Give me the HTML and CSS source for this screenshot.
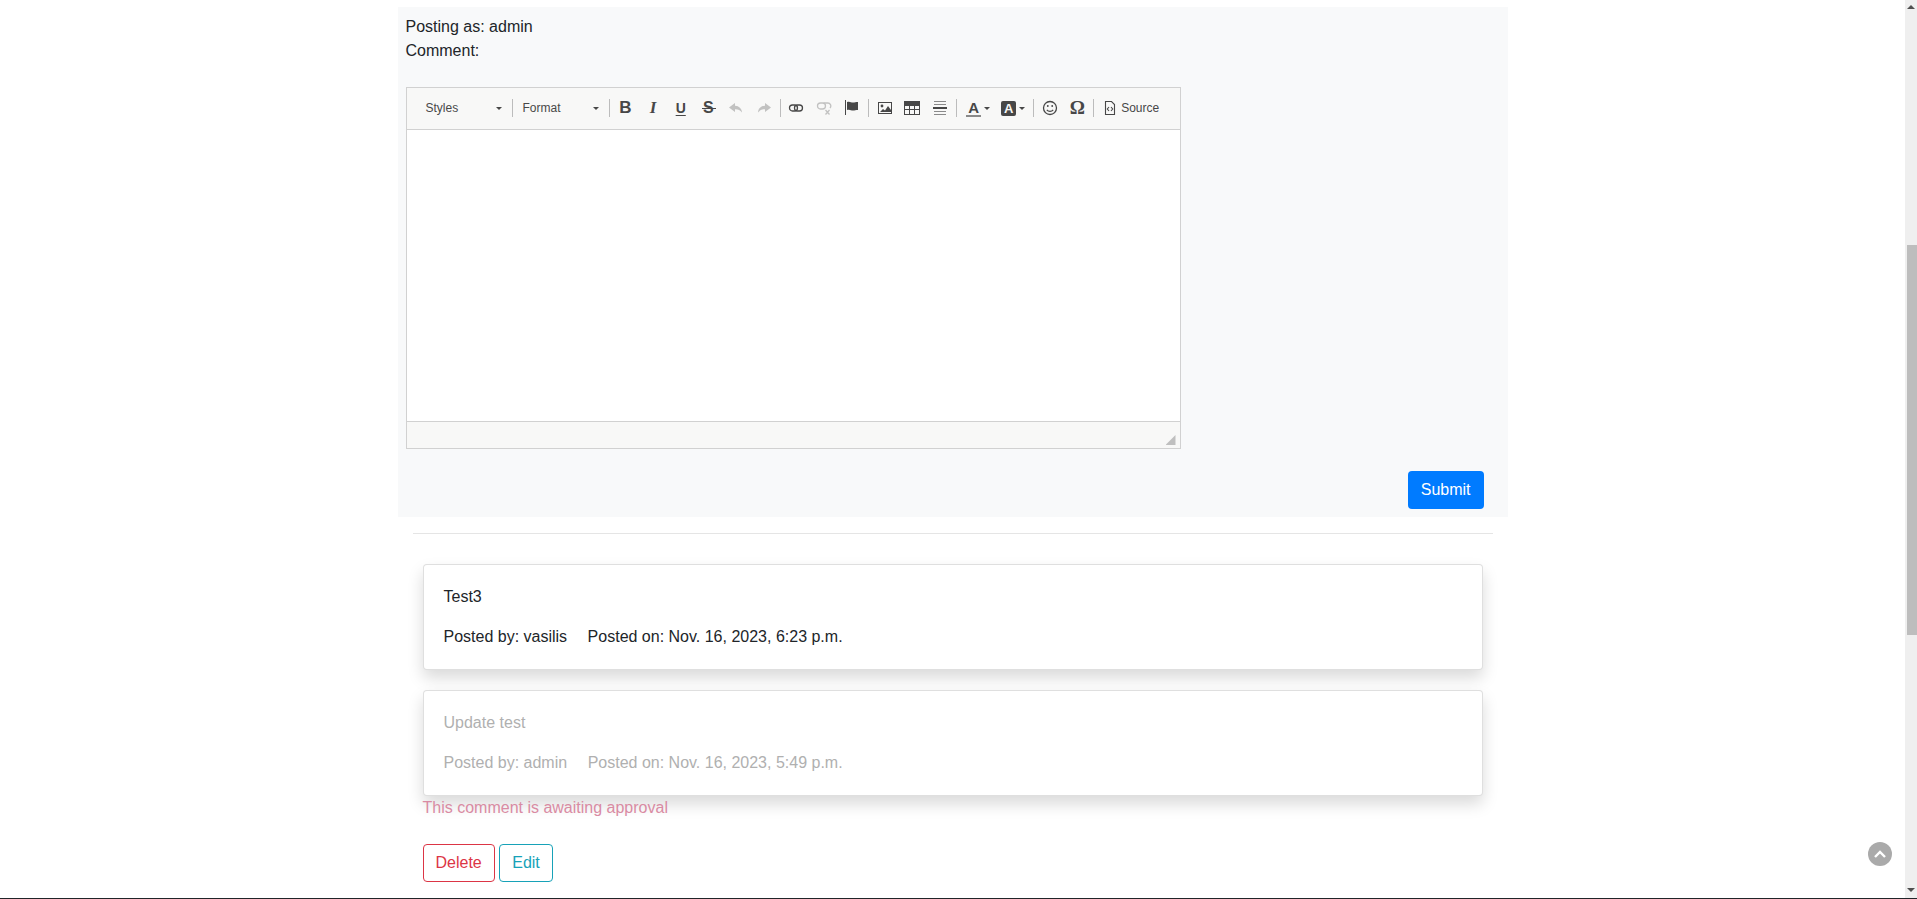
FILE: index.html
```html
<!DOCTYPE html>
<html lang="en">
<head>
  <meta charset="UTF-8" />
  <title>Comments</title>
  <meta name="viewport" content="width=device-width, initial-scale=1.0" />
  <link rel="stylesheet" href="styles.css">
</head>
<body>

<div class="viewport">
  <main class="page">
    <div class="container">

      <form class="comment-form">
        <div>Posting as: admin</div>
        <label class="comment-label">Comment:</label>

        <div class="editor">
          <div class="toolbar">
            <div class="combo combo-first"><span>Styles</span><i class="caret"></i></div>
            <i class="sep"></i>
            <div class="combo"><span>Format</span><i class="caret"></i></div>
            <i class="sep"></i>

            <span class="tool glyph-b">B</span>
            <span class="tool glyph-i">I</span>
            <span class="tool glyph-u">U</span>
            <span class="tool glyph-s">S</span>
            <span class="tool off">
              <svg width="16" height="16" viewBox="0 0 16 16"><path d="M7 3 1 7.500 7 12V9.200c3-.2 5 .8 7 3.300C13.800 8.500 11 5.800 7 5.700z"/></svg>
            </span>
            <span class="tool off">
              <svg width="16" height="16" viewBox="0 0 16 16"><path d="M9 3l6 4.500L9 12V9.200c-3-.2-5 .8-7 3.300C2.200 8.500 5 5.800 9 5.700z"/></svg>
            </span>
            <i class="sep"></i>

            <span class="tool">
              <svg width="16" height="16" viewBox="0 0 16 16" fill="none" stroke="#474747" stroke-width="1.300"><rect x="1.500" y="5" width="8" height="6" rx="3"/><rect x="6.500" y="5" width="8" height="6" rx="3"/></svg>
            </span>
            <span class="tool off">
              <svg width="16" height="16" viewBox="0 0 16 16" fill="none" stroke="#474747" stroke-width="1.300"><rect x="1.500" y="3" width="8" height="6" rx="3"/><path d="M7.500 3h4a3 3 0 0 1 2.500 5"/><path d="M9.500 10l4 4.500M13.500 10l-4 4.500"/></svg>
            </span>
            <span class="tool">
              <svg width="16" height="16" viewBox="0 0 16 16"><path d="M1 0h1v15H1z"/><path d="M3 2c3-1 4 .6 6 .6 1.500 0 3-.6 5-.6v8c-2 0-3.500.6-5 .6-2 0-3-1.400-6-.6z"/></svg>
            </span>
            <i class="sep"></i>

            <span class="tool">
              <svg width="16" height="16" viewBox="0 0 16 16"><path fill-rule="evenodd" d="M1 2h14v12H1zm1 1v10h12V3z"/><circle cx="5" cy="6" r="1.400"/><path d="M3 12l3-3 2 1.500L11 6l3 4v2z"/></svg>
            </span>
            <span class="tool">
              <svg width="16" height="16" viewBox="0 0 16 16"><path fill-rule="evenodd" d="M0 1h16v14H0zm1 5v3h4V6zm5 0v3h4V6zm5 0v3h4V6zM1 10v4h4v-4zm5 0v4h4v-4zm5 0v4h4v-4z"/></svg>
            </span>
            <span class="tool">
              <svg width="16" height="16" viewBox="0 0 16 16"><path fill="#8a8a8a" d="M2 1h12v1H2zM2 4h12v1H2zM2 11h12v1H2zM2 14h12v1H2z"/><path d="M1 7h14v2H1z"/></svg>
            </span>
            <i class="sep sep-wide"></i>

            <span class="tool tool-panel"><span class="glyph-a">A</span><i class="caret"></i></span>
            <span class="tool tool-panel"><span class="glyph-bg">A</span><i class="caret"></i></span>
            <i class="sep"></i>

            <span class="tool">
              <svg width="16" height="16" viewBox="0 0 16 16" fill="none" stroke="#474747"><circle cx="8" cy="8" r="6.500" stroke-width="1.300"/><path d="M4.800 9.800c1.500 2 4.900 2 6.400 0" stroke-width="1.200"/><circle cx="5.800" cy="6" r=".9" fill="#474747" stroke="none"/><circle cx="10.200" cy="6" r=".9" fill="#474747" stroke="none"/></svg>
            </span>
            <span class="tool glyph-omega">Ω</span>
            <i class="sep"></i>

            <span class="tool tool-source">
              <svg width="16" height="16" viewBox="0 0 16 16" fill="none" stroke="#474747"><path d="M3.500 1.500h6l3 3v10h-9z" stroke-width="1.100"/><path d="M7 7 5.300 9 7 11M9 7l1.700 2L9 11" stroke-width="1.100"/></svg>
              <span class="source-label">Source</span>
            </span>
          </div>

          <div class="editor-body"></div>

          <div class="editor-footer"><i class="resizer"></i></div>
        </div>

        <div class="form-actions">
          <button type="button" class="btn btn-primary">Submit</button>
        </div>
      </form>

      <hr class="divider">

      <div class="comments">
        <div class="card">
          <p>Test3</p>
          <p><span class="posted-by">Posted by: vasilis</span>Posted on: Nov. 16, 2023, 6:23 p.m.</p>
        </div>

        <div class="card card-pending">
          <p>Update test</p>
          <p><span class="posted-by">Posted by: admin</span>Posted on: Nov. 16, 2023, 5:49 p.m.</p>
        </div>
        <div class="awaiting">This comment is awaiting approval</div>

        <div class="comment-actions">
          <button type="button" class="btn btn-outline-danger">Delete</button>
          <button type="button" class="btn btn-outline-info">Edit</button>
        </div>
      </div>

    </div>
  </main>

  <div class="scrollbar">
    <i class="arrow-up"></i>
    <i class="thumb"></i>
    <i class="arrow-down"></i>
  </div>
</div>

<div class="page-end"></div>

<a class="to-top" href="#">
  <svg width="14" height="14" viewBox="0 0 14 14" fill="none" stroke="#fff" stroke-width="2.400"><path d="M2 10l5-5 5 5"/></svg>
</a>

</body>
</html>
```

FILE: styles.css
```css
html, body {
  height: 100%;
  margin: 0;
  overflow: hidden;
}

body {
  display: flex;
  flex-direction: column;
  background: #fff;
  color: #212529;
  font-family: "Liberation Sans", Arial, sans-serif;
  font-size: 16px;
  line-height: 1.5;
}

.viewport {
  display: flex;
  flex: 1;
  min-height: 0;
}

.page {
  flex: 1;
  min-width: 0;
}

.container {
  width: 1110px;
  margin: 0 auto;
  padding-top: 7px;
}

/* comment form */
.comment-form {
  background: #f8f9fa;
  padding: 8px 24px 8px 8px;
}

.comment-label {
  display: block;
  margin-bottom: 24px;
}

.editor {
  width: 775px;
  box-sizing: border-box;
  border: 1px solid #d1d1d1;
}

.toolbar {
  display: flex;
  align-items: center;
  height: 40px;
  padding: 0 0 1px 5px;
  background: #f8f8f7;
  border-bottom: 1px solid #d1d1d1;
  color: #484848;
  font-size: 12px;
}

.combo {
  display: flex;
  align-items: center;
  justify-content: space-between;
  width: 92px;
  box-sizing: border-box;
  padding: 0 8px;
}

.combo-first {
  width: 98px;
  padding-left: 14px;
}

.caret {
  width: 0;
  height: 0;
  border-top: 3px solid #474747;
  border-left: 3px solid transparent;
  border-right: 3px solid transparent;
}

.sep {
  width: 1px;
  height: 18px;
  margin: 0 2px;
  background: #bcbcbc;
  flex: none;
}

.sep-wide {
  margin-right: 4px;
}

.tool {
  position: relative;
  display: flex;
  align-items: center;
  justify-content: center;
  width: 27.7px;
  height: 24px;
  flex: none;
  color: #474747;
  fill: #474747;
}

.off {
  opacity: .3;
}

.glyph-b {
  font-size: 17px;
  font-weight: bold;
}

.glyph-i {
  font-family: "Liberation Serif", serif;
  font-size: 17px;
  font-weight: bold;
  font-style: italic;
}

.glyph-u {
  font-size: 14px;
  font-weight: bold;
  text-decoration: underline;
  text-underline-offset: 2px;
}

.glyph-s {
  font-size: 16px;
  font-weight: bold;
}

.glyph-s::after {
  content: "";
  position: absolute;
  left: 7px;
  top: 12px;
  width: 14px;
  height: 1px;
  background: #474747;
}

.glyph-omega {
  font-family: "Liberation Serif", serif;
  font-size: 19px;
  font-weight: bold;
}

.tool-panel {
  width: 35px;
  gap: 3px;
}

.glyph-a {
  width: 15px;
  font-size: 15px;
  font-weight: bold;
  line-height: 15px;
  text-align: center;
  border-bottom: 2px solid #8a8a8a;
}

.glyph-bg {
  width: 15px;
  height: 15px;
  background: #474747;
  border-radius: 2px;
  color: #f8f8f7;
  font-size: 13px;
  font-weight: bold;
  line-height: 15px;
  text-align: center;
}

.tool-source {
  width: auto;
  gap: 3px;
  padding-left: 6px;
}

.source-label {
  font-size: 12px;
}

.editor-body {
  height: 291px;
  background: #fff;
}

.editor-footer {
  display: flex;
  align-items: flex-end;
  justify-content: flex-end;
  height: 27px;
  box-sizing: border-box;
  padding: 0 4px 3px 0;
  background: #f8f8f7;
  border-top: 1px solid #d1d1d1;
}

.resizer {
  width: 10px;
  height: 10px;
  background: #bfbfbf;
  clip-path: polygon(100% 0, 100% 100%, 0 100%);
}

.form-actions {
  display: flex;
  justify-content: flex-end;
  margin-top: 22px;
}

.btn {
  height: 38px;
  padding: 6px 12px;
  border: 1px solid transparent;
  border-radius: 4px;
  background: transparent;
  font: inherit;
  box-sizing: border-box;
}

.btn-primary {
  background: #007bff;
  color: #fff;
}

.btn-outline-danger {
  border-color: #dc3545;
  color: #dc3545;
}

.btn-outline-info {
  border-color: #17a2b8;
  color: #17a2b8;
}

.divider {
  margin: 16px 15px 30px;
  border: 0;
  border-top: 1px solid rgba(0, 0, 0, .1);
}

/* comments */
.comments {
  margin: 0 25px;
}

.card {
  background: #fff;
  border: 1px solid rgba(0, 0, 0, .125);
  border-radius: 4px;
  box-shadow: 0 8px 16px rgba(0, 0, 0, .15);
  padding: 20px;
  margin-bottom: 20px;
}

.card p {
  margin: 0 0 16px;
}

.card p:last-child {
  margin-bottom: 0;
}

.posted-by {
  margin-right: 20.5px;
}

.card-pending {
  margin-bottom: 0;
  color: #b0b0b0;
}

.awaiting {
  color: #d98ba3;
}

.comment-actions {
  margin-top: 24px;
}

.page-end {
  height: 1px;
  background: #212529;
  flex: none;
}

/* fake scrollbar, page is shown scrolled */
.scrollbar {
  display: flex;
  flex-direction: column;
  align-items: center;
  width: 12px;
  flex: none;
  background: #efefef;
}

.arrow-up,
.arrow-down {
  width: 0;
  height: 0;
  border-left: 4px solid transparent;
  border-right: 4px solid transparent;
}

.arrow-up {
  margin-top: 5px;
  border-bottom: 4px solid #505050;
}

.arrow-down {
  margin-top: 253px;
  border-top: 4px solid #505050;
}

.thumb {
  width: 10px;
  height: 390px;
  margin: 236px 0 0 2px;
  background: #bdbdbd;
}

.to-top {
  position: fixed;
  right: 25px;
  bottom: 33px;
  display: flex;
  align-items: center;
  justify-content: center;
  width: 24px;
  height: 24px;
  border-radius: 50%;
  background: #aaa;
}
```
